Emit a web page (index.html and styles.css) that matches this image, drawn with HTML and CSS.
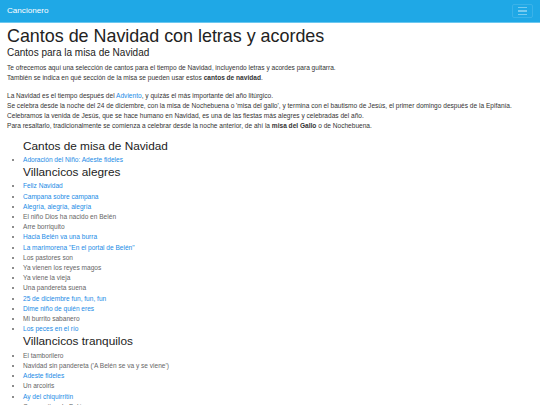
FILE: index.html
```html
<!DOCTYPE html>
<html lang="es">
<head>
<meta charset="utf-8">
<title>Cancionero</title>
<link rel="stylesheet" href="styles.css">
</head>
<body>
<nav class="navbar">
  <a class="brand" href="#">Cancionero</a>
  <button class="toggler" type="button" aria-label="Menú">
    <span class="bar"></span><span class="bar"></span><span class="bar"></span>
  </button>
</nav>
<main class="content">
  <h1 class="title">Cantos de Navidad con letras y acordes</h1>
  <h2 class="subtitle">Cantos para la misa de Navidad</h2>
  <p class="para">Te ofrecemos aquí una selección de cantos para el tiempo de Navidad<a class="link" href="#">,</a> incluyendo letras y acordes para guitarra.<br>También se indica en qué sección de la misa se pueden usar estos <b>cantos de navidad</b>.</p>
  <p class="para">La Navidad es el tiempo después del <a class="link" href="#">Adviento</a>, y quizás el más importante del año litúrgico.<br>Se celebra desde la noche del 24 de diciembre, con la misa de Nochebuena o 'misa del gallo', y termina con el bautismo de Jesús, el primer domingo después de la Epifanía.<br>Celebramos la venida de Jesús, que se hace humano en Navidad, es una de las fiestas más alegres y celebradas del año.<br>Para resaltarlo, tradicionalmente se comienza a celebrar desde la noche anterior, de ahí la <b>misa del Gallo</b> o de Nochebuena.</p>
  <ul class="songs">
    <h3 class="group first">Cantos de misa de Navidad</h3>
    <li><a class="link" href="#">Adoración del Niño: Adeste fideles</a></li>
    <h3 class="group">Villancicos alegres</h3>
    <li><a class="link" href="#">Feliz Navidad</a></li>
    <li><a class="link" href="#">Campana sobre campana</a></li>
    <li><a class="link" href="#">Alegría, alegría, alegría</a></li>
    <li>El niño Dios ha nacido en Belén</li>
    <li>Arre borriquito</li>
    <li><a class="link" href="#">Hacia Belén va una burra</a></li>
    <li><a class="link" href="#">La marimorena "En el portal de Belén"</a></li>
    <li>Los pastores son</li>
    <li>Ya vienen los reyes magos</li>
    <li>Ya viene la vieja</li>
    <li>Una pandereta suena</li>
    <li><a class="link" href="#">25 de diciembre fun, fun, fun</a></li>
    <li><a class="link" href="#">Dime niño de quién eres</a></li>
    <li>Mi burrito sabanero</li>
    <li><a class="link" href="#">Los peces en el río</a></li>
    <h3 class="group">Villancicos tranquilos</h3>
    <li>El tamborilero</li>
    <li>Navidad sin pandereta ('A Belén se va y se viene')</li>
    <li><a class="link" href="#">Adeste fideles</a></li>
    <li>Un arcoiris</li>
    <li><a class="link" href="#">Ay del chiquirritín</a></li>
    <li>Campanitas de Belén</li>
  </ul>
</main>
</body>
</html>
```
FILE: styles.css
```css
html, body {
  margin: 0;
  padding: 0;
}
body {
  font-family: "Liberation Sans", Arial, sans-serif;
  font-size: 6.57px;
  line-height: 10.2px;
  color: #333;
  background: #fff;
}
.navbar {
  display: flex;
  align-items: center;
  justify-content: space-between;
  height: 22px;
  padding: 0 7px;
  background: #1fa8e6;
  border-bottom: 1px solid #6cc8f0;
}
.brand {
  color: #fff;
  text-decoration: none;
  font-size: 8.1px;
  line-height: 10px;
}
.toggler {
  width: 21px;
  height: 14px;
  padding: 0;
  margin: 0;
  background: transparent;
  border: 1px solid rgba(255,255,255,0.12);
  border-radius: 2px;
  display: flex;
  flex-direction: column;
  align-items: center;
  justify-content: center;
  gap: 2px;
}
.toggler .bar {
  display: block;
  width: 9px;
  height: 1.3px;
  background: rgba(255,255,255,0.4);
}
.content {
  padding: 0 7px;
}
.title {
  font-size: 17.9px;
  font-weight: normal;
  line-height: 20px;
  margin: 2.5px 0 0;
  color: #222;
}
.subtitle {
  font-size: 10px;
  font-weight: normal;
  line-height: 12px;
  margin: 1px 0 4px;
  color: #222;
}
.para {
  margin: 0 0 7.7px;
}
.link {
  color: #1a8be6;
  text-decoration: none;
}
.songs {
  margin: 0;
  padding-left: 16px;
  color: #666;
}
.group {
  font-size: 11.8px;
  font-weight: normal;
  line-height: 14px;
  margin: 0 0 2.5px;
  color: #222;
}
.group.first {
  margin-bottom: 1.5px;
}
```
